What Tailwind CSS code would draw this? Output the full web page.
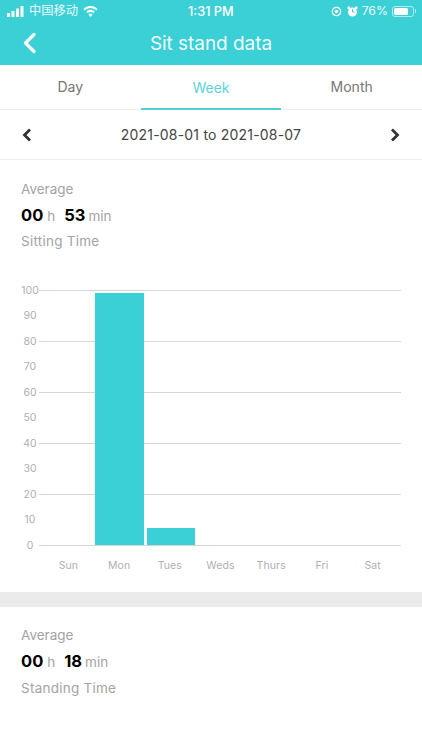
<!DOCTYPE html>
<html>
<head>
<meta charset="utf-8">
<script src="https://cdn.jsdelivr.net/npm/@tailwindcss/browser@4"></script>
</head>
<body class="bg-white font-['Inter','Noto_Sans_CJK_SC',sans-serif] overflow-hidden">
<div class="w-[422px] h-[750px] flex flex-col overflow-hidden">
  <!-- header -->
  <div class="bg-[#3bd0d6] h-[65px] flex flex-col text-white shrink-0">
    <div class="h-[22px] flex items-center justify-between relative pl-[7px] pr-[6px] text-[12px]">
      <div class="flex items-center gap-[4px]">
        <svg width="18" height="11" viewBox="0 0 18 11" fill="#fff"><rect x="0" y="7" width="3" height="4" rx=".6"/><rect x="4.5" y="5" width="3" height="6" rx=".6"/><rect x="9" y="2.5" width="3" height="8.5" rx=".6"/><rect x="13.5" y="0" width="3" height="11" rx=".6"/></svg>
        <span class="text-[12.25px] text-white/90">中国移动</span>
        <svg class="ml-[1px]" width="15" height="11" viewBox="0 0 15 11" fill="#fff"><path d="M7.5 0C4.7 0 2.2 1.1.4 2.9l1.4 1.5C3.3 3 5.3 2.1 7.5 2.1s4.2.9 5.7 2.3l1.4-1.5C12.8 1.1 10.3 0 7.5 0z"/><path d="M7.5 3.8c-1.7 0-3.2.7-4.3 1.8l1.4 1.5c.8-.7 1.8-1.2 2.9-1.2s2.1.5 2.9 1.2l1.4-1.5C10.7 4.5 9.2 3.8 7.5 3.8z"/><path d="M7.5 7.6c-.8 0-1.5.3-2 .8l2 2.6 2-2.6c-.5-.5-1.2-.8-2-.8z"/></svg>
      </div>
      <span class="absolute left-[188px] top-[4px] text-[12.75px] font-medium leading-[15px]">1:31 PM</span>
      <div class="flex items-center">
        <svg width="11" height="11" viewBox="0 0 11 11" fill="none" stroke="#fff"><circle cx="5.5" cy="5.5" r="4.2" stroke-width="1.2"/><circle cx="5.5" cy="5.5" r="1.8" fill="#fff" stroke="none"/></svg>
        <svg class="ml-[5px]" width="11" height="11" viewBox="0 0 11 11" fill="#fff"><circle cx="5.5" cy="6" r="4.5"/><circle cx="1.8" cy="1.8" r="1.5"/><circle cx="9.2" cy="1.8" r="1.5"/><path d="M5.5 3.2V6h2" stroke="#3bd0d6" fill="none"/></svg>
        <span class="ml-[4px] text-[12.25px] text-white/90">76%</span>
        <div class="ml-[4px] w-[22px] h-[11px] rounded-[3px] border border-white/60 p-[1px]"><div class="h-full w-[76%] bg-white rounded-[1.5px]"></div></div>
        <div class="w-[1px] h-[4px] bg-white/60 ml-[1px]"></div>
      </div>
    </div>
    <div class="relative flex-1 flex items-center justify-center">
      <svg class="absolute left-[23px] top-[10px]" width="13" height="22" viewBox="0 0 13 22" fill="none" stroke="#fff" stroke-width="3.2" stroke-linecap="round" stroke-linejoin="round"><path d="M11 2.5 2.5 11l8.5 8.5"/></svg>
      <span class="text-[19px] leading-none text-white/95 tracking-[-.05px] -mt-[1px]">Sit stand data</span>
    </div>
  </div>
  <!-- tabs -->
  <div class="h-[45px] grid grid-cols-3 border-b border-[#eeeeee] shrink-0 text-[14px] text-center text-[#777777]">
    <div class="flex items-center justify-center pb-[1px]"><span>Day</span></div>
    <div class="flex items-center justify-center text-[#59d3da] border-b-2 border-[#4fd0d6] -mb-[1px] pt-[1px]"><span>Week</span></div>
    <div class="flex items-center justify-center pb-[1px]"><span>Month</span></div>
  </div>
  <!-- date -->
  <div class="h-[50px] flex items-center justify-between pl-[22px] pr-[22px] border-b border-[#eeeeee] shrink-0">
    <svg width="10" height="14" viewBox="0 0 10 14" fill="none" stroke="#333" stroke-width="2.8"><path d="M8 1.5 2.5 7 8 12.5"/></svg>
    <span class="text-[14px] text-[#444444] tracking-[.2px]">2021-08-01 to 2021-08-07</span>
    <svg width="10" height="14" viewBox="0 0 10 14" fill="none" stroke="#333" stroke-width="2.8"><path d="M2 1.5 7.5 7 2 12.5"/></svg>
  </div>
  <!-- sitting -->
  <div class="pl-[21px] pt-[19px] shrink-0">
    <p class="text-[13.5px] leading-[20px] text-[#a3a3a3]">Average</p>
    <p class="mt-[5.5px] leading-[20px] text-[13.5px] text-[#a3a3a3] flex items-baseline"><b class="text-[16.5px] font-bold text-black">00</b><span class="ml-[4px]">h</span><b class="ml-[9px] text-[16.5px] font-bold text-black">53</b><span class="ml-[3px]">min</span></p>
    <p class="mt-[5.5px] text-[13.5px] leading-[20px] text-[#a3a3a3] tracking-[.25px]">Sitting Time</p>
  </div>
  <!-- chart -->
  <div class="relative mt-[27px] px-[21px] shrink-0 text-[10.5px] text-[#b0b0b0] h-[314px]">
    <div class="flex flex-col">
      <div class="h-[25.5px] flex items-center"><span class="w-[18px] text-center">100</span><div class="flex-1 h-px bg-[#d6d6d6]"></div></div>
      <div class="h-[25.5px] flex items-center"><span class="w-[18px] text-center">90</span></div>
      <div class="h-[25.5px] flex items-center"><span class="w-[18px] text-center">80</span><div class="flex-1 h-px bg-[#d6d6d6]"></div></div>
      <div class="h-[25.5px] flex items-center"><span class="w-[18px] text-center">70</span></div>
      <div class="h-[25.5px] flex items-center"><span class="w-[18px] text-center">60</span><div class="flex-1 h-px bg-[#d6d6d6]"></div></div>
      <div class="h-[25.5px] flex items-center"><span class="w-[18px] text-center">50</span></div>
      <div class="h-[25.5px] flex items-center"><span class="w-[18px] text-center">40</span><div class="flex-1 h-px bg-[#d6d6d6]"></div></div>
      <div class="h-[25.5px] flex items-center"><span class="w-[18px] text-center">30</span></div>
      <div class="h-[25.5px] flex items-center"><span class="w-[18px] text-center">20</span><div class="flex-1 h-px bg-[#d6d6d6]"></div></div>
      <div class="h-[25.5px] flex items-center"><span class="w-[18px] text-center">10</span></div>
      <div class="h-[25.5px] flex items-center"><span class="w-[18px] text-center">0</span><div class="flex-1 h-px bg-[#d6d6d6]"></div></div>
    </div>
    <div class="absolute left-[95px] top-[15px] w-[49px] h-[252px] bg-[#3bd0d6]"></div>
    <div class="absolute left-[146.5px] top-[250px] w-[48.5px] h-[17px] bg-[#3bd0d6]"></div>
    <div class="ml-[22px] -mt-[3px] grid grid-cols-7 w-[355px] text-center h-[20px] items-center tracking-[.1px]">
      <span>Sun</span><span>Mon</span><span>Tues</span><span>Weds</span><span>Thurs</span><span>Fri</span><span>Sat</span>
    </div>
  </div>
  <div class="h-[15px] bg-[#ebebeb] shrink-0"></div>
  <!-- standing -->
  <div class="pl-[21px] pt-[18px] shrink-0">
    <p class="text-[13.5px] leading-[20px] text-[#a3a3a3]">Average</p>
    <p class="mt-[6px] leading-[20px] text-[13.5px] text-[#a3a3a3] flex items-baseline"><b class="text-[16.5px] font-bold text-black">00</b><span class="ml-[4px]">h</span><b class="ml-[9px] text-[16.5px] font-bold text-black">18</b><span class="ml-[3px]">min</span></p>
    <p class="mt-[6px] text-[13.5px] leading-[20px] text-[#a3a3a3] tracking-[.25px]">Standing Time</p>
  </div>
</div>
</body>
</html>
